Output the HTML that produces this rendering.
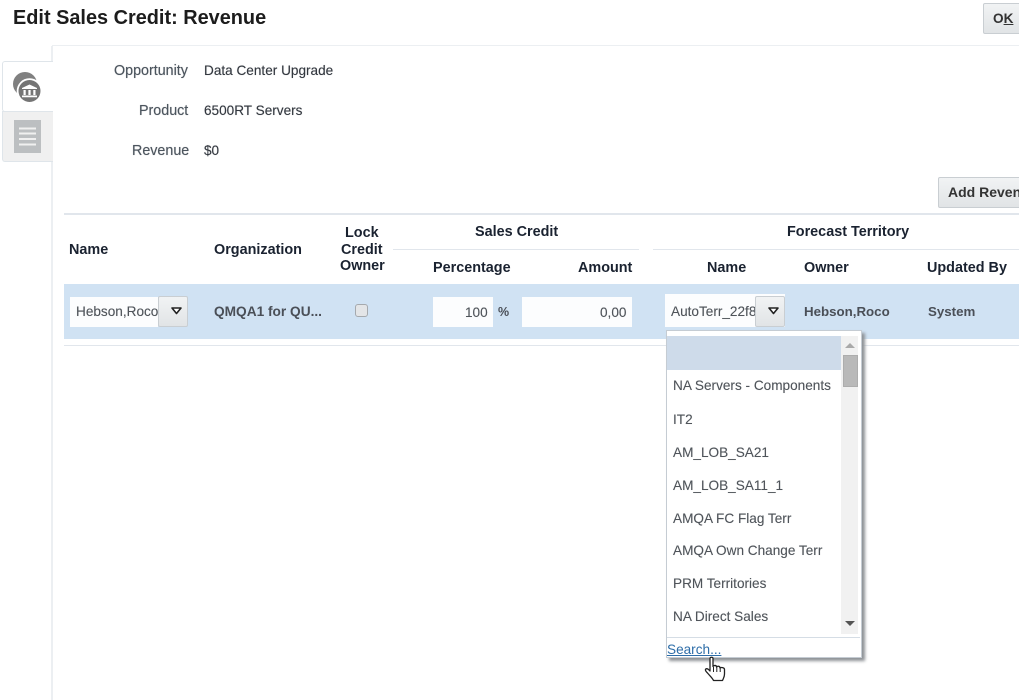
<!DOCTYPE html>
<html><head><meta charset="utf-8"><style>
html,body{margin:0;padding:0;background:#fff}
#p{position:relative;width:1019px;height:700px;overflow:hidden;background:#fff;font-family:"Liberation Sans",sans-serif;font-size:13.6px;color:#333}
#p div,#p svg{position:absolute}
.t{white-space:nowrap;line-height:18px;height:18px;margin-top:1px}
.l{color:#4c555e;font-size:14.3px;text-shadow:0 0 .6px rgba(70,75,85,.7)}
.v{color:#33383f;text-shadow:0 0 .6px rgba(60,65,75,.6)}
.h{font-weight:bold;color:#1a2230;font-size:14.4px}
.b{font-weight:bold;color:#4a4f57;font-size:13.3px}
.i{color:#4f545a;text-shadow:0 0 .5px rgba(80,85,90,.5)}
.inp{background:#fcfdfe}
.btn{background:linear-gradient(#f1f3f4,#e1e4e6);border:1px solid #c9ced2;box-sizing:border-box;border-radius:2px}
.line{background:#e1e6ec}
</style></head><body><div id="p">
<div class="t" style="left:13px;top:7px;margin-top:0;font-size:19.9px;font-weight:bold;color:#1c1c1c;line-height:22px;height:22px">Edit Sales Credit: Revenue</div>
<div class="btn" style="left:983px;top:3px;width:50px;height:31px"></div>
<div class="t" style="left:993px;top:9px;font-weight:bold;color:#333">O<span style="text-decoration:underline">K</span></div>

<div class="line" style="left:52px;top:45px;width:967px;height:1px;background:#eceff2"></div>
<div class="line" style="left:51px;top:46px;width:2px;height:654px;background:#eceff2"></div>
<div style="left:2px;top:61px;width:50px;height:49px;background:#fff;border:1px solid #dfe5ea;border-right:none;border-radius:3px 0 0 3px;box-sizing:content-box"></div>
<div style="left:2px;top:111px;width:50px;height:49px;background:#f0f0f0;border:1px solid #dfe5ea;border-right:none;border-radius:0 0 0 3px"></div>
<svg style="left:11px;top:70px" width="32" height="34" viewBox="0 0 32 34">
<circle cx="14" cy="14" r="12" fill="#808080"/>
<circle cx="18.500" cy="21" r="12.800" fill="#fff"/>
<circle cx="18.500" cy="21" r="11" fill="#757575"/>
<path d="M18.500 14.500l7.500 3.500v1h-15v-1z" fill="#fff"/>
<path d="M12.500 20h2.200v5h-2.200zM17.400 20h2.200v5h-2.200zM22.300 20h2.200v5h-2.200zM11 25.500h15v1.800h-15z" fill="#fff"/>
</svg>
<svg style="left:14px;top:120px" width="27" height="33" viewBox="0 0 27 33">
<rect width="27" height="33" fill="#bcbfc1"/>
<path d="M5 8.500h17M5 13.500h17M5 19h17M5 24.500h17" stroke="#f0f0f0" stroke-width="2"/>
</svg>

<div class="t l" style="left:114px;top:61px">Opportunity</div>
<div class="t v" style="left:204px;top:61px">Data Center Upgrade</div>
<div class="t l" style="left:139px;top:101px">Product</div>
<div class="t v" style="left:204px;top:101px">6500RT Servers</div>
<div class="t l" style="left:132px;top:141px">Revenue</div>
<div class="t v" style="left:204px;top:141px">$0</div>

<div class="btn" style="left:938px;top:177px;width:100px;height:31px"></div>
<div class="t" style="left:948px;top:183px;margin-top:0;font-weight:bold;color:#333;font-size:14px">Add Revenue</div>

<div class="line" style="left:64px;top:213px;width:955px;height:2px"></div>
<div class="t h" style="left:69px;top:240px">Name</div>
<div class="t h" style="left:214px;top:240px">Organization</div>
<div class="t h" style="left:345px;top:223px">Lock</div>
<div class="t h" style="left:341px;top:240px">Credit</div>
<div class="t h" style="left:340px;top:256px">Owner</div>
<div class="t h" style="left:475px;top:222px">Sales Credit</div>
<div class="t h" style="left:787px;top:222px">Forecast Territory</div>
<div class="line" style="left:393px;top:249px;width:246px;height:1px"></div>
<div class="line" style="left:653px;top:249px;width:366px;height:1px"></div>
<div class="t h" style="left:433px;top:258px">Percentage</div>
<div class="t h" style="left:578px;top:258px">Amount</div>
<div class="t h" style="left:707px;top:258px">Name</div>
<div class="t h" style="left:804px;top:258px">Owner</div>
<div class="t h" style="left:927px;top:258px">Updated By</div>

<div style="left:64px;top:284px;width:955px;height:55px;background:#d0e2f3"></div>
<div class="line" style="left:64px;top:345px;width:955px;height:1px"></div>

<div class="inp" style="left:70px;top:297px;width:88px;height:30px"></div>
<div class="t i" style="left:76px;top:302px;width:83px;overflow:hidden">Hebson,Roco</div>
<div class="btn" style="left:158px;top:296px;width:30px;height:31px"></div>
<svg style="left:170px;top:306px" width="13" height="10" viewBox="0 0 13 10"><path d="M2 2h9L6.500 7.500z" fill="#fff" stroke="#222" stroke-width="1.600" stroke-linejoin="round"/></svg>

<div class="t b" style="left:214px;top:302px;font-size:13.700px">QMQA1 for QU...</div>
<div style="left:355px;top:304px;width:13px;height:13px;box-sizing:border-box;background:#e3e5e7;border:1px solid #a5a9ad;border-radius:3px"></div>

<div class="inp" style="left:433px;top:297px;width:60px;height:30px"></div>
<div class="t i" style="left:465px;top:303px">100</div>
<div class="t b" style="left:498px;top:302px;font-size:12.500px">%</div>
<div class="inp" style="left:522px;top:297px;width:110px;height:30px"></div>
<div class="t i" style="left:600px;top:303px">0,00</div>

<div class="inp" style="left:665px;top:294px;width:120px;height:33px"></div>
<div class="t i" style="left:671px;top:302px;width:84px;overflow:hidden">AutoTerr_22f8</div>
<div class="btn" style="left:755px;top:296px;width:30px;height:31px"></div>
<svg style="left:767px;top:306px" width="13" height="10" viewBox="0 0 13 10"><path d="M2 2h9L6.500 7.500z" fill="#fff" stroke="#222" stroke-width="1.600" stroke-linejoin="round"/></svg>
<div class="t b" style="left:804px;top:302px">Hebson,Roco</div>
<div class="t b" style="left:928px;top:302px">System</div>

<div style="left:666px;top:330px;width:196px;height:328px;box-sizing:border-box;background:#fff;border:1px solid #c5ccd3;box-shadow:3px 3px 3px #8e9296"></div>
<div style="left:667px;top:336px;width:174px;height:34px;background:#cedbea"></div>
<div style="left:841px;top:336px;width:17px;height:298px;background:#f1f1f1"></div>
<div style="left:843px;top:355px;width:15px;height:32px;background:#b9b9b9;border:1px solid #adadad;box-sizing:border-box"></div>
<svg style="left:845px;top:342px" width="10" height="7"><path d="M0 6L5 1l5 5z" fill="#a9a9a9"/></svg>
<svg style="left:845px;top:620px" width="10" height="7"><path d="M0 1h10L5 6z" fill="#555"/></svg>
<div class="t i" style="left:673px;top:376px">NA Servers - Components</div>
<div class="t i" style="left:673px;top:410px">IT2</div>
<div class="t i" style="left:673px;top:443px">AM_LOB_SA21</div>
<div class="t i" style="left:673px;top:476px">AM_LOB_SA11_1</div>
<div class="t i" style="left:673px;top:509px">AMQA FC Flag Terr</div>
<div class="t i" style="left:673px;top:541px">AMQA Own Change Terr</div>
<div class="t i" style="left:673px;top:574px">PRM Territories</div>
<div class="t i" style="left:673px;top:607px">NA Direct Sales</div>
<div class="line" style="left:667px;top:637px;width:193px;height:1px;background:#d5dde5"></div>
<div class="t" style="left:667px;top:640px;color:#2d6da8;text-decoration:underline">Search...</div>
<svg style="left:704px;top:656px" width="24" height="27" viewBox="0 0 24 27">
<path d="M6 2.500C6 .8 9 .8 9 2.500V10.500C10 9 12.500 9 12.500 11C13.500 9.800 16 10 16 12C17 11 20.500 11.500 20.500 13.500V18C20.500 21 19.500 22 18.500 24.500H9.500C8.500 22 6 20 3.500 17C2 15.500 .8 14 1.800 13C3 12 4.700 13.500 6 15z" fill="#fff" stroke="#222" stroke-width="1.300" stroke-linejoin="round"/>
<path d="M9.500 11v5M12.800 11v5M16.200 12v4" stroke="#222" stroke-width="1"/>
</svg>
</div></body></html>
